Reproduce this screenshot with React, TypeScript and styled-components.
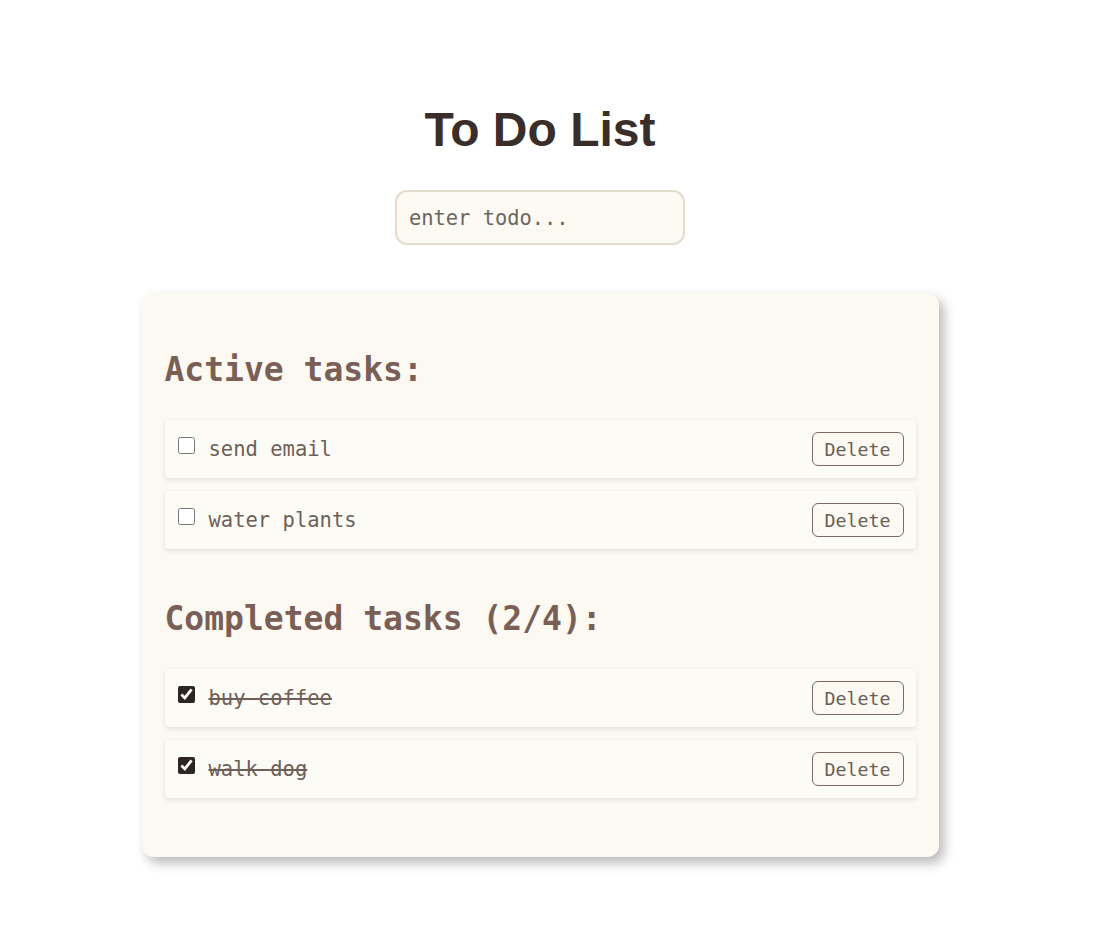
import React, { useState } from "react";
import styled, { createGlobalStyle } from "styled-components";

const GlobalStyle = createGlobalStyle`
  html, body {
    margin: 0;
    padding: 0;
    background: #ffffff;
  }
  * { box-sizing: border-box; }
`;

const MONO = `"DejaVu Sans Mono", "Liberation Mono", monospace`;

const Page = styled.div`
  width: 1080px;
  padding: 102px 0 60px;
  display: flex;
  flex-direction: column;
  align-items: center;
`;

const Title = styled.h1`
  margin: 0;
  font-family: "Liberation Sans", Arial, sans-serif;
  font-weight: 700;
  font-size: 48px;
  line-height: 56px;
  color: #3a2e2a;
`;

const TodoInput = styled.input`
  margin-top: 32px;
  width: 290px;
  height: 55px;
  padding: 0 12px;
  border: 2px solid #e4dccd;
  border-radius: 12px;
  background: #fcfaf3;
  font-family: ${MONO};
  font-size: 20.4px;
  color: #4a403c;
  outline: none;
  &::placeholder {
    color: #6b6661;
  }
`;

const Card = styled.div`
  margin-top: 48px;
  width: 797px;
  padding: 57px 23px 59px;
  background: #fbf9f1;
  border-radius: 12px;
  box-shadow: 5px 6px 12px rgba(0, 0, 0, 0.28);
  display: flex;
  flex-direction: column;
  gap: 50px;
`;

const Section = styled.section`
  display: flex;
  flex-direction: column;
`;

const Heading = styled.h2`
  margin: 0 0 30px;
  font-family: ${MONO};
  font-weight: 700;
  font-size: 33px;
  line-height: 40px;
  color: #7a5f57;
`;

const List = styled.ul`
  list-style: none;
  margin: 0;
  padding: 0;
  display: flex;
  flex-direction: column;
  gap: 13px;
`;

const Row = styled.li`
  height: 58px;
  display: flex;
  align-items: center;
  justify-content: space-between;
  padding: 0 12px 0 13px;
  background: #fcfbf5;
  border-radius: 4px;
  box-shadow: 0 2px 5px rgba(0, 0, 0, 0.1);
`;

const Label = styled.label`
  display: flex;
  align-items: center;
  gap: 14px;
`;

const Check = styled.input`
  width: 17px;
  height: 17px;
  margin: 0 0 8px 0;
  accent-color: #2d2523;
`;

const TaskText = styled.span<{ $done: boolean }>`
  font-family: ${MONO};
  font-size: 20.5px;
  color: #6f5f58;
  text-decoration: ${(p) => (p.$done ? "line-through" : "none")};
  text-decoration-thickness: 2px;
`;

const DeleteButton = styled.button`
  width: 92px;
  height: 34px;
  padding: 0;
  border: 1px solid #7d6b63;
  border-radius: 6px;
  background: #fbf9f1;
  font-family: ${MONO};
  font-size: 18.3px;
  color: #6d5d55;
  cursor: pointer;
`;

type Todo = { id: number; text: string; done: boolean };

export default function App() {
  const [todos, setTodos] = useState<Todo[]>([
    { id: 1, text: "send email", done: false },
    { id: 2, text: "water plants", done: false },
    { id: 3, text: "buy coffee", done: true },
    { id: 4, text: "walk dog", done: true },
  ]);
  const [value, setValue] = useState("");

  const toggle = (id: number) =>
    setTodos((t) => t.map((x) => (x.id === id ? { ...x, done: !x.done } : x)));
  const remove = (id: number) => setTodos((t) => t.filter((x) => x.id !== id));

  const active = todos.filter((t) => !t.done);
  const done = todos.filter((t) => t.done);

  const renderRow = (t: Todo) => (
    <Row key={t.id}>
      <Label>
        <Check type="checkbox" checked={t.done} onChange={() => toggle(t.id)} />
        <TaskText $done={t.done}>{t.text}</TaskText>
      </Label>
      <DeleteButton onClick={() => remove(t.id)}>Delete</DeleteButton>
    </Row>
  );

  return (
    <>
      <GlobalStyle />
      <Page>
        <Title>To Do List</Title>
        <TodoInput
          placeholder="enter todo..."
          value={value}
          onChange={(e) => setValue(e.target.value)}
          onKeyDown={(e) => {
            if (e.key === "Enter" && value.trim()) {
              setTodos((t) => [...t, { id: Date.now(), text: value.trim(), done: false }]);
              setValue("");
            }
          }}
        />
        <Card>
          <Section>
            <Heading>Active tasks:</Heading>
            <List>{active.map(renderRow)}</List>
          </Section>
          <Section>
            <Heading>
              Completed tasks ({done.length}/{todos.length}):
            </Heading>
            <List>{done.map(renderRow)}</List>
          </Section>
        </Card>
      </Page>
    </>
  );
}
